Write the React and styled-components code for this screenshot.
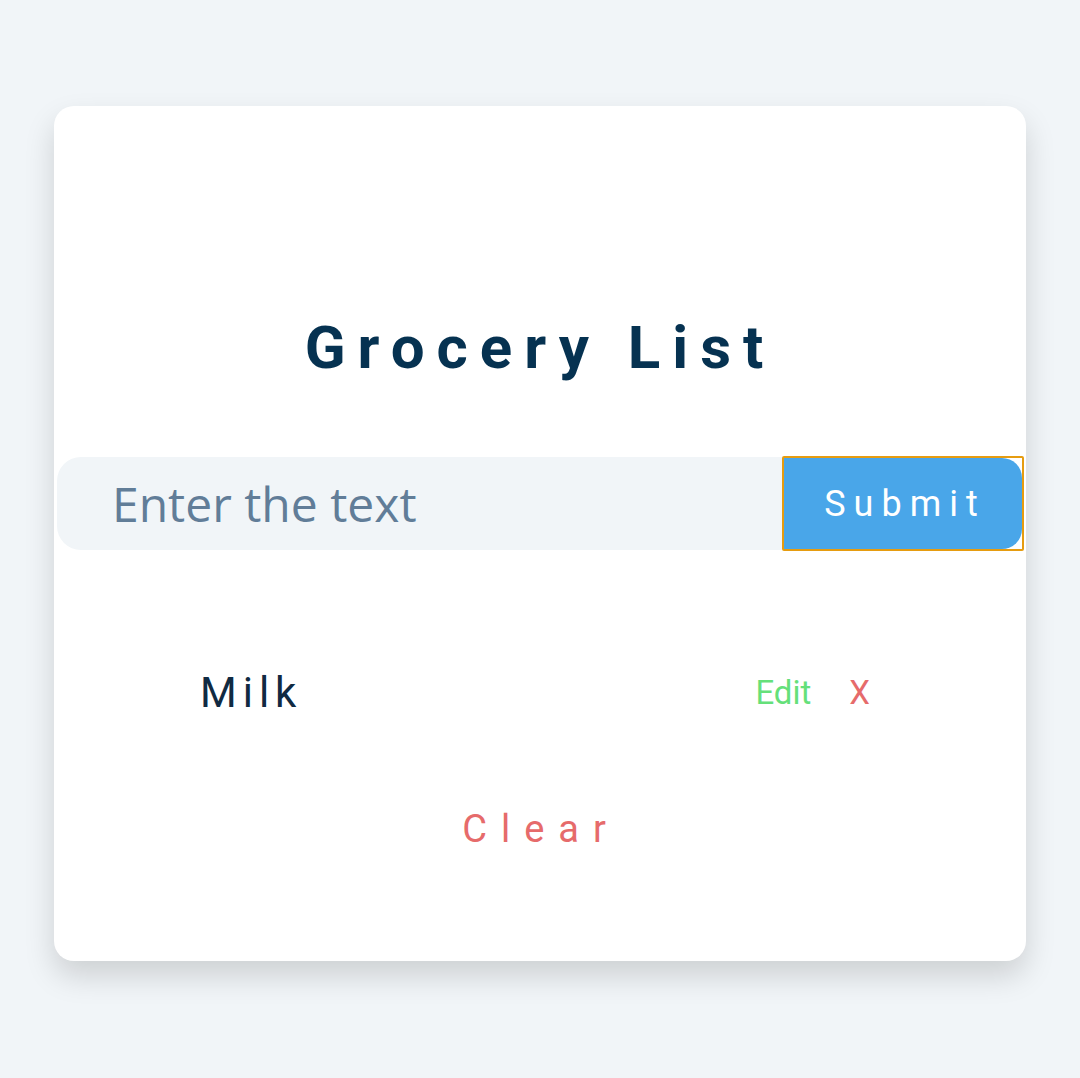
import styled, { createGlobalStyle } from 'styled-components';

const GlobalStyle = createGlobalStyle`
    body {
        margin: 0;
        background: #f1f5f8;
        font-family: Roboto, "Liberation Sans", sans-serif;
    }
`

const items = [{ id: 1, title: 'Milk' }];

const App = () => {
    return (
        <Page>
            <GlobalStyle />
            <Card>
                {/* Title */}
                <Title>Grocery List</Title>

                {/* Form */}
                <Form onSubmit={(e) => e.preventDefault()}>
                    <Input placeholder="Enter the text" />
                    <FocusRing>
                        <SubmitBtn type="submit">Submit</SubmitBtn>
                    </FocusRing>
                </Form>

                {/* List */}
                <List>
                    {items.map((item) => (
                        <Item key={item.id}>
                            <ItemTitle>{item.title}</ItemTitle>
                            <Actions>
                                <ActionBtn color="#65e07a">Edit</ActionBtn>
                                <ActionBtn color="#e66b6b">X</ActionBtn>
                            </Actions>
                        </Item>
                    ))}
                </List>

                <ClearBtn>Clear</ClearBtn>
            </Card>
        </Page>
    )
}

export default App


const Page = styled.main`
    min-height: 100vh;
    padding: 106px 0 60px;
    box-sizing: border-box;
`

const Card = styled.section`
    width: 972px;
    margin: 0 auto;
    padding: 206px 0 107px;
    box-sizing: border-box;
    background: #fff;
    border-radius: 20px;
    box-shadow: 0 15px 30px rgba(0, 0, 0, 0.15);
    display: flex;
    flex-direction: column;
    align-items: center;
`

const Title = styled.h3`
    margin: 0;
    height: 72px;
    font-size: 60px;
    line-height: 72px;
    font-weight: 700;
    letter-spacing: 12px;
    color: #063251;
    text-align: center;
`

const Form = styled.form`
    align-self: stretch;
    margin: 72px 2px 0 3px;
    display: flex;
    align-items: center;
`

const Input = styled.input`
    flex: 1;
    height: 93px;
    box-sizing: border-box;
    border: none;
    outline: none;
    background: #f1f5f8;
    border-radius: 24px 0 0 24px;
    padding: 0 0 0 55px;
    font-family: "Open Sans", sans-serif;
    font-size: 48px;
    color: #102a42;

    &::placeholder {
        color: #617d98;
        opacity: 1;
    }
`

/* focused button: the outline draws square round a rounded button */
const FocusRing = styled.div`
    width: 242px;
    height: 95px;
    box-sizing: border-box;
    border: 2px solid #e69c10;
    border-radius: 2px;
    display: flex;
`

const SubmitBtn = styled.button`
    flex: 1;
    border: none;
    background: #49a6e9;
    border-radius: 0 20px 20px 0;
    color: #fff;
    font-family: Roboto, sans-serif;
    font-size: 36px;
    letter-spacing: 8px;
    padding: 0 0 0 4px;
    cursor: pointer;
`

const List = styled.ul`
    list-style: none;
    margin: 111px 0 0;
    padding: 0;
    width: 670px;
    align-self: flex-start;
    margin-left: 146px;
`

const Item = styled.li`
    height: 60px;
    display: flex;
    align-items: center;
    justify-content: space-between;
`

const ItemTitle = styled.p`
    margin: 0;
    font-size: 42px;
    letter-spacing: 6px;
    color: #102a42;
`

const Actions = styled.div`
    display: flex;
    align-items: center;
    gap: 38px;
`

const ActionBtn = styled.button`
    background: transparent;
    border: none;
    padding: 0;
    font-family: Roboto, sans-serif;
    font-size: 33px;
    color: ${(p) => p.color};
    cursor: pointer;
`

const ClearBtn = styled.button`
    margin-top: 82px;
    height: 50px;
    background: transparent;
    border: none;
    padding: 0 0 0 2px;
    font-family: Roboto, sans-serif;
    font-size: 38px;
    letter-spacing: 14px;
    color: #e66b6b;
    cursor: pointer;
`
